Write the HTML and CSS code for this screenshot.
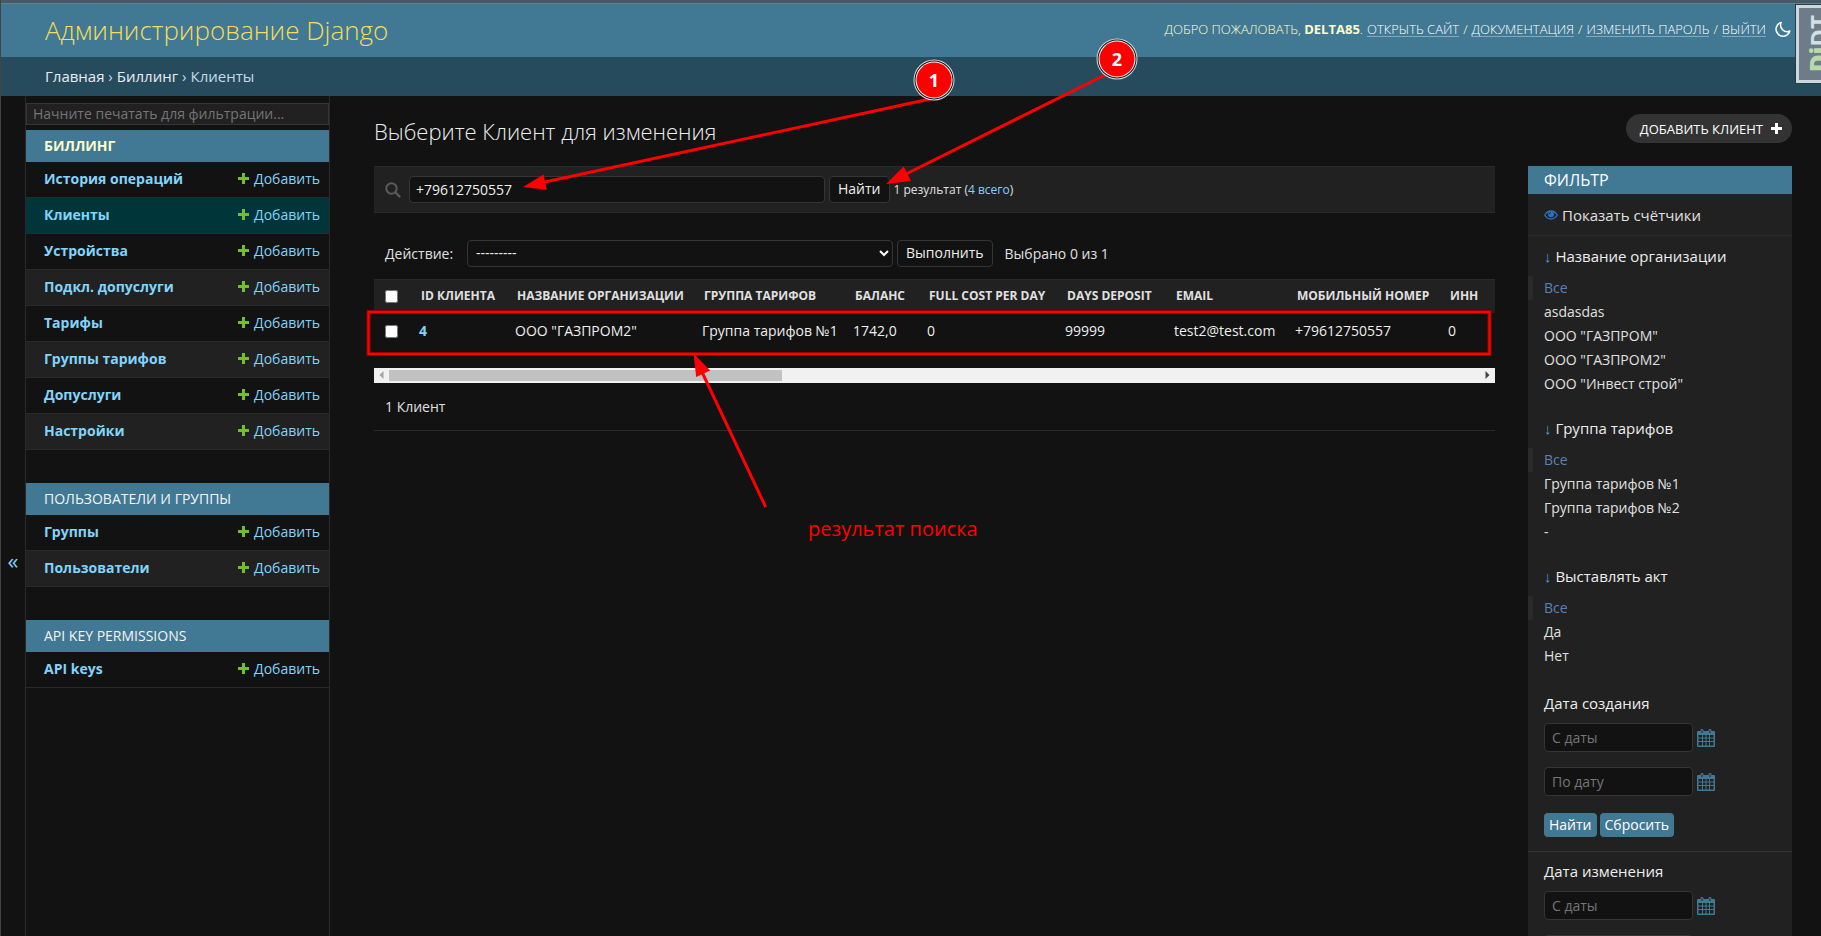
FILE: index.html
```html
<!DOCTYPE html>
<html lang="ru">
<head>
<meta charset="utf-8">
<title>Выберите Клиент для изменения | Администрирование Django</title>
<link rel="stylesheet" href="styles.css">
</head>
<body>
<svg class="defs" aria-hidden="true">
  <symbol id="plus" viewBox="0 0 11 11"><path d="M4 0h3v4h4v3H7v4H4V7H0V4h4z"/></symbol>
  <symbol id="calendar" viewBox="0 0 18 18">
    <path fill-rule="evenodd" d="M1 2h2.500V1q0-1 1.500-1t1.500 1v1h5V1q0-1 1.500-1t1.500 1v1H17q1 0 1 1v14q0 1-1 1H1q-1 0-1-1V3q0-1 1-1zM1.500 6v2.500H5V6zM6 6v2.500h2.500V6zM9.500 6v2.500H12V6zM13 6v2.500h3.500V6zM1.500 9.500V12H5V9.500zM6 9.500V12h2.500V9.500zM9.500 9.500V12H12V9.500zM13 9.500V12h3.500V9.500zM1.500 13v3.500H5V13zM6 13v3.500h2.500V13zM9.500 13v3.500H12V13zM13 13v3.500h3.500V13zM4.500 1.500v2.500h1V1.500zM12.500 1.500v2.500h1V1.500z"/>
  </symbol>
</svg>

<header class="header">
  <a class="branding" href="#">Администрирование Django</a>
  <div class="user-tools">
    <span>Добро пожаловать, <strong>delta85</strong>.</span>
    <a href="#">Открыть сайт</a> / <a href="#">Документация</a> / <a href="#">Изменить пароль</a> / <a href="#">Выйти</a>
    <button class="theme" type="button" aria-label="Тема">
      <svg width="16" height="16" viewBox="0 0 16 16"><path d="M6.200 1.400A7 7 0 1 0 14.800 10 6.500 6.500 0 0 1 6.200 1.400z" fill="none" stroke="currentColor" stroke-width="1.500" stroke-linejoin="round"/></svg>
    </button>
  </div>
</header>
<nav class="breadcrumbs" aria-label="Навигация"><a href="#">Главная</a> › <a href="#">Биллинг</a> › <span>Клиенты</span></nav>

<div class="main">
  <button class="toggle" type="button" aria-label="Скрыть панель">«</button>
  <aside class="sidebar">
    <input class="nav-filter" type="search" placeholder="Начните печатать для фильтрации..." aria-label="Фильтр навигации">
    <section class="module current">
      <h2>Биллинг</h2>
      <ul>
        <li><a href="#">История операций</a><a class="add" href="#"><svg><use href="#plus"/></svg>Добавить</a></li>
        <li class="active"><a href="#">Клиенты</a><a class="add" href="#"><svg><use href="#plus"/></svg>Добавить</a></li>
        <li><a href="#">Устройства</a><a class="add" href="#"><svg><use href="#plus"/></svg>Добавить</a></li>
        <li><a href="#">Подкл. допуслуги</a><a class="add" href="#"><svg><use href="#plus"/></svg>Добавить</a></li>
        <li><a href="#">Тарифы</a><a class="add" href="#"><svg><use href="#plus"/></svg>Добавить</a></li>
        <li><a href="#">Группы тарифов</a><a class="add" href="#"><svg><use href="#plus"/></svg>Добавить</a></li>
        <li><a href="#">Допуслуги</a><a class="add" href="#"><svg><use href="#plus"/></svg>Добавить</a></li>
        <li><a href="#">Настройки</a><a class="add" href="#"><svg><use href="#plus"/></svg>Добавить</a></li>
      </ul>
    </section>
    <section class="module">
      <h2>Пользователи и группы</h2>
      <ul>
        <li><a href="#">Группы</a><a class="add" href="#"><svg><use href="#plus"/></svg>Добавить</a></li>
        <li><a href="#">Пользователи</a><a class="add" href="#"><svg><use href="#plus"/></svg>Добавить</a></li>
      </ul>
    </section>
    <section class="module">
      <h2>API Key Permissions</h2>
      <ul>
        <li><a href="#">API keys</a><a class="add" href="#"><svg><use href="#plus"/></svg>Добавить</a></li>
      </ul>
    </section>
  </aside>

  <main class="content">
    <div class="title-row">
      <h1>Выберите Клиент для изменения</h1>
      <a class="add-client" href="#">Добавить Клиент<svg><use href="#plus"/></svg></a>
    </div>
    <div class="columns">
      <div class="changelist">
        <form class="search">
          <label for="q" aria-label="Поиск"><svg width="16" height="16" viewBox="0 0 16 16"><circle cx="6.500" cy="6.500" r="5.200" fill="none" stroke="currentColor" stroke-width="2"/><path d="M10.500 10.500l4 4" stroke="currentColor" stroke-width="2.400" stroke-linecap="round"/></svg></label>
          <input id="q" type="text" value="+79612750557">
          <button type="button">Найти</button>
          <span class="count">1 результат (<a href="#">4 всего</a>)</span>
        </form>
        <div class="actions">
          <label for="action">Действие:</label>
          <div class="select">
            <select id="action"><option>---------</option></select>
            <svg width="10" height="7" viewBox="0 0 10 7"><path d="M1 1l4 4 4-4" fill="none" stroke="currentColor" stroke-width="2"/></svg>
          </div>
          <button type="button">Выполнить</button>
          <span class="selected">Выбрано 0 из 1</span>
        </div>
        <table class="results">
          <colgroup><col class="c-check"><col class="c-id"><col class="c-org"><col class="c-group"><col class="c-bal"><col class="c-cost"><col class="c-days"><col class="c-email"><col class="c-phone"><col></colgroup>
          <thead>
            <tr><th><input type="checkbox" aria-label="Выбрать все"></th><th>ID клиента</th><th>Название организации</th><th>Группа тарифов</th><th>Баланс</th><th>Full cost per day</th><th>Days deposit</th><th>Email</th><th>Мобильный номер</th><th>ИНН</th></tr>
          </thead>
          <tbody>
            <tr><td><input type="checkbox" aria-label="Выбрать строку"></td><td><a href="#">4</a></td><td>ООО "ГАЗПРОМ2"</td><td>Группа тарифов №1</td><td>1742,0</td><td>0</td><td>99999</td><td>test2@test.com</td><td>+79612750557</td><td>0</td></tr>
          </tbody>
        </table>
        <div class="scrollbar" aria-hidden="true">
          <svg class="prev" width="5" height="8" viewBox="0 0 5 8"><path d="M4.500 0v8L.500 4z"/></svg>
          <div class="rail"><div class="thumb"></div></div>
          <svg width="5" height="8" viewBox="0 0 5 8"><path d="M.500 0v8l4-4z"/></svg>
        </div>
        <p class="paginator">1 Клиент</p>
      </div>

      <aside class="filter">
        <h2>Фильтр</h2>
        <a class="facets" href="#"><svg width="14" height="10" viewBox="0 0 14 10"><path d="M.700 5Q3.200 1 7 1t6.300 4Q10.800 9 7 9T.700 5z" fill="none" stroke="currentColor" stroke-width="1.300"/><circle cx="7" cy="4.300" r="3" fill="currentColor"/><path d="M5.300 4.200q.100-1.500 1.700-1.600" stroke="#212121" stroke-width=".8" fill="none"/></svg>Показать счётчики</a>
        <section>
          <h3><i>↓</i> Название организации</h3>
          <ul><li class="on"><a href="#">Все</a></li><li><a href="#">asdasdas</a></li><li><a href="#">ООО "ГАЗПРОМ"</a></li><li><a href="#">ООО "ГАЗПРОМ2"</a></li><li><a href="#">ООО "Инвест строй"</a></li></ul>
        </section>
        <section>
          <h3><i>↓</i> Группа тарифов</h3>
          <ul><li class="on"><a href="#">Все</a></li><li><a href="#">Группа тарифов №1</a></li><li><a href="#">Группа тарифов №2</a></li><li><a href="#">-</a></li></ul>
        </section>
        <section>
          <h3><i>↓</i> Выставлять акт</h3>
          <ul><li class="on"><a href="#">Все</a></li><li><a href="#">Да</a></li><li><a href="#">Нет</a></li></ul>
        </section>
        <form class="dates">
          <h3>Дата создания</h3>
          <div class="date"><input type="text" placeholder="С даты" aria-label="Дата создания: с даты"><svg><use href="#calendar"/></svg></div>
          <div class="date"><input type="text" placeholder="По дату" aria-label="Дата создания: по дату"><svg><use href="#calendar"/></svg></div>
          <div class="buttons"><button type="button">Найти</button><button type="button">Сбросить</button></div>
        </form>
        <form class="dates">
          <h3>Дата изменения</h3>
          <div class="date"><input type="text" placeholder="С даты" aria-label="Дата изменения: с даты"><svg><use href="#calendar"/></svg></div>
          <div class="date"><input type="text" aria-label="Дата изменения: по дату"><svg><use href="#calendar"/></svg></div>
        </form>
      </aside>
    </div>
  </main>
</div>

<a class="djdt" href="#"><span><b>Dj</b>DT</span></a>

<svg class="marks" aria-hidden="true">
  <rect x="368.500" y="312" width="1121" height="42" fill="none" stroke="#900" stroke-width="4"/>
  <rect x="368.500" y="312" width="1121" height="42" fill="none" stroke="#f00" stroke-width="2"/>
  <g stroke="#f00" stroke-width="3">
    <path d="M930 99L545 182"/><path d="M1105 75L906 174"/><path d="M765.700 507L702 372"/>
  </g>
  <g fill="#f00">
    <path d="M523 187l20.600-12.500 3.200 15.300z"/><path d="M886 184l17.700-17.500 7.300 14.500z"/><path d="M693.500 353.500l2.700 23.500 14-6.500z"/>
  </g>
  <g class="badge">
    <circle cx="934" cy="80" r="20.500" fill="#ddd"/><circle cx="934" cy="80" r="19.500" fill="#111"/><circle cx="934" cy="80" r="18.500" fill="#fff"/><circle cx="934" cy="80" r="17.500" fill="#f00"/>
    <text x="934" y="87">1</text>
    <circle cx="1117" cy="59" r="20.500" fill="#ddd"/><circle cx="1117" cy="59" r="19.500" fill="#111"/><circle cx="1117" cy="59" r="18.500" fill="#fff"/><circle cx="1117" cy="59" r="17.500" fill="#f00"/>
    <text x="1117" y="66">2</text>
  </g>
  <text class="note" x="808" y="536">результат поиска</text>
</svg>
</body>
</html>
```
FILE: styles.css
```css
* { box-sizing: border-box; }
html, body { height: 100%; }
body {
  margin: 0;
  display: flex;
  flex-direction: column;
  position: relative;
  overflow: hidden;
  background: #121212;
  color: #e0e0e0;
  border-left: 1px solid #444;
  font: 14px/18px "Open Sans", "Noto Sans", sans-serif;
}
a { color: #81d4fa; text-decoration: none; }
h1, h2, h3, ul, p { margin: 0; padding: 0; font-weight: 400; }
ul { list-style: none; }
button, input, select { font: inherit; color: inherit; }
button { cursor: pointer; }
.defs { position: absolute; width: 0; height: 0; }

.header {
  flex: none;
  display: flex;
  justify-content: space-between;
  height: 57px;
  padding: 0 30px 0 44px;
  background: #417893;
  border-top: 3px solid #455a64;
  box-shadow: inset 0 1px #64808c;
  color: #ffc;
}
.branding { font-size: 26px; font-weight: 300; line-height: 54px; color: #f5dd5d; }
.user-tools {
  display: flex;
  align-items: center;
  gap: 4px;
  height: 52px;
  font-size: 13px;
  font-weight: 300;
  text-transform: uppercase;
}
.user-tools strong { font-weight: 700; }
.user-tools a { color: #fff; line-height: 14px; border-bottom: 1px solid #84a9ba; }
.theme { display: flex; margin-left: 5px; padding: 0; border: 0; background: none; color: #fff; }

.breadcrumbs {
  flex: none;
  height: 39px;
  padding-left: 44px;
  background: #264b5d;
  color: #c4dce8;
  font-size: 15px;
  line-height: 38px;
}
.breadcrumbs a { color: #e8eef0; }

.main { flex: 1; display: flex; min-height: 0; }
.toggle { flex: none; width: 24px; padding: 88px 0 0; border: 0; background: none; color: #81d4fa; font-size: 22px; }
.sidebar { flex: none; width: 305px; padding-top: 7px; border: solid #2a2a2a; border-width: 0 1px; }
.nav-filter {
  display: block;
  width: 100%;
  height: 22px;
  margin-bottom: 5px;
  padding: 0 6px 2px;
  background: #212121;
  border: 1px solid #353535;
  border-radius: 0;
  outline: 0;
  appearance: none;
}
::placeholder { color: #757575; opacity: 1; }
.module { margin-bottom: 33px; }
.module h2 {
  padding: 0 18px;
  background: #417893;
  color: #f5f5f5;
  font-size: 14px;
  line-height: 32px;
  text-transform: uppercase;
}
.module.current h2 { color: #ffc; font-weight: 700; }
.module li {
  display: flex;
  justify-content: space-between;
  align-items: center;
  height: 36px;
  padding: 0 9px 2px 18px;
  border-bottom: 1px solid #2a2a2a;
  font-weight: 700;
}
.module li:nth-child(even) { background: #212121; }
.module li.active { background: #00363a; }
.module .add { display: flex; align-items: center; gap: 5px; font-weight: 400; }
.add svg { width: 11px; height: 11px; fill: #70bf2b; }

.content { flex: 1; min-width: 0; padding: 18px 29px 0 44px; }
.title-row { display: flex; justify-content: space-between; height: 52px; }
h1 { font-size: 22px; font-weight: 300; line-height: 34px; color: #eee; }
.add-client {
  display: flex;
  align-items: center;
  gap: 8px;
  height: 29px;
  padding: 0 10px 0 14px;
  border-radius: 15px;
  background: #333;
  color: #fff;
  font-size: 13px;
  text-transform: uppercase;
}
.add-client svg { width: 11px; height: 11px; fill: #fff; }
.columns { display: flex; gap: 33px; align-items: flex-start; }
.changelist { flex: 1; min-width: 0; }

.search {
  display: flex;
  align-items: center;
  gap: 4px;
  height: 47px;
  padding: 0 11px;
  background: #212121;
  border: solid #2a2a2a;
  border-width: 1px 0;
}
.search label { display: flex; margin-right: 4px; color: #5a5a5a; }
.search input, .search button, .actions button, .select select {
  height: 27px;
  padding: 0 8px 1px;
  background: #121212;
  border: 1px solid #353535;
  border-radius: 4px;
  color: #eee;
}
.search input { width: 416px; padding: 0 6px 1px; }
.count { font-size: 12px; }

.actions { display: flex; align-items: center; gap: 4px; height: 66px; padding: 15px 11px 0; }
.actions label { width: 78px; }
.select { position: relative; width: 426px; color: #fff; }
.select select { display: block; width: 100%; appearance: none; }
.select svg { position: absolute; right: 4px; top: 10px; }
.selected { margin-left: 8px; }

.results { width: 100%; table-layout: fixed; border-collapse: collapse; white-space: nowrap; }
.results th {
  height: 33px;
  padding: 0 10px;
  background: #212121;
  border-top: 1px solid #2a2a2a;
  font-size: 12px;
  text-align: left;
  text-transform: uppercase;
}
.results td { height: 53px; padding: 0 8px 16px; color: #eee; }
.results th:first-child, .results td:first-child { padding-left: 11px; }
.results td a { font-weight: 700; }
.results input { display: block; width: 13px; height: 13px; margin: 0; }
.c-check { width: 37px; }
.c-id { width: 96px; }
.c-org { width: 187px; }
.c-group { width: 151px; }
.c-bal { width: 74px; }
.c-cost { width: 138px; }
.c-days { width: 109px; }
.c-email { width: 121px; }
.c-phone { width: 153px; }

.scrollbar { display: flex; align-items: center; justify-content: space-between; height: 15px; margin-top: 2px; padding: 0 5px; background: #f1f1f1; fill: #444; }
.scrollbar .prev { fill: #a3a3a3; }
.rail { flex: 1; padding: 0 5px; }
.thumb { width: 36%; height: 11px; background: #c1c1c1; }
.paginator { height: 48px; padding: 0 11px; border-bottom: 1px solid #2a2a2a; line-height: 47px; }

.filter { flex: none; width: 264px; background: #212121; }
.filter h2 { padding: 0 16px; background: #417893; color: #fff; font-size: 16px; line-height: 28px; text-transform: uppercase; }
.facets { display: flex; align-items: center; gap: 4px; height: 42px; padding: 1px 0 0 16px; border-bottom: 1px solid #2a2a2a; color: #e0e0e0; font-size: 15px; }
.facets svg { color: #2b70c4; }
.filter section { padding: 10px 0 4px; }
.filter section:last-of-type { padding-bottom: 8px; }
.filter h3 { padding: 0 16px; font-size: 15px; line-height: 20px; color: #eee; }
.filter h3 i { color: #4a9fd8; font-style: normal; }
.filter ul { padding: 10px 0 8px; }
.filter li { border-left: 5px solid transparent; padding-left: 11px; line-height: 24px; }
.filter li a { color: #e0e0e0; }
.filter li.on { border-color: #2a2a2a; }
.filter li.on a { color: #5b80b8; }
.dates { padding: 9px 0 14px; border-bottom: 1px solid #353535; }
.date { display: flex; align-items: center; gap: 4px; margin: 10px 16px 15px; }
.date input { width: 149px; height: 29px; padding: 0 7px; background: #121212; border: 1px solid #353535; border-radius: 4px; }
.date svg { width: 18px; height: 18px; fill: #417893; }
.buttons { display: flex; gap: 3px; padding: 2px 16px 0; }
.buttons button { height: 24px; padding: 0 5px; border: 0; border-radius: 4px; background: #417893; color: #fff; }

.djdt {
  position: absolute;
  top: 4px;
  right: -12px;
  display: flex;
  align-items: center;
  width: 38px;
  height: 80px;
  padding-left: 8px;
  border: 4px solid #cbd8de;
  outline: 1px solid #263c47;
  outline-offset: -1px;
  background: #6d7c86;
  color: #cfe0e8;
  font-size: 24px;
  font-weight: 700;
  line-height: 24px;
}
.djdt span { writing-mode: vertical-rl; transform: rotate(180deg); }
.djdt b { color: #b8d9ae; }

.marks { position: absolute; left: -1px; top: 0; width: 1821px; height: 936px; pointer-events: none; }
.badge text { fill: #fff; font-size: 18px; font-weight: 700; text-anchor: middle; }
.note { fill: #f00; font-size: 20px; }
```
